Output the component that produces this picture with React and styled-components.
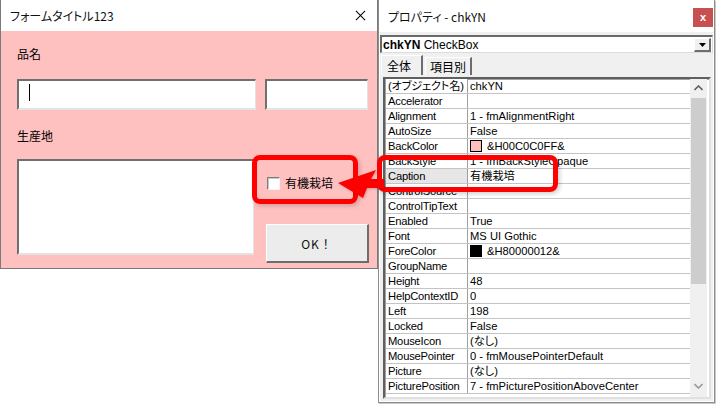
import React from "react";
import styled, { createGlobalStyle } from "styled-components";

const GlobalStyle = createGlobalStyle`
  html, body {
    margin: 0;
    padding: 0;
    background: #fff;
    overflow: hidden;
  }
  body {
    font-family: "Liberation Sans", "Noto Sans CJK JP", sans-serif;
    color: #000;
  }
  * { box-sizing: border-box; }
`;

const jp = `"Noto Sans CJK JP", "Liberation Sans", sans-serif`;

const properties = [
  { name: "(オブジェクト名)", value: "chkYN" },
  { name: "Accelerator", value: "" },
  { name: "Alignment", value: "1 - fmAlignmentRight" },
  { name: "AutoSize", value: "False" },
  { name: "BackColor", value: "&H00C0C0FF&", swatch: "#ffc0c0" },
  { name: "BackStyle", value: "1 - fmBackStyleOpaque" },
  { name: "Caption", value: "有機栽培", selected: true },
  { name: "ControlSource", value: "" },
  { name: "ControlTipText", value: "" },
  { name: "Enabled", value: "True" },
  { name: "Font", value: "MS UI Gothic" },
  { name: "ForeColor", value: "&H80000012&", swatch: "#000" },
  { name: "GroupName", value: "" },
  { name: "Height", value: "48" },
  { name: "HelpContextID", value: "0" },
  { name: "Left", value: "198" },
  { name: "Locked", value: "False" },
  { name: "MouseIcon", value: "(なし)" },
  { name: "MousePointer", value: "0 - fmMousePointerDefault" },
  { name: "Picture", value: "(なし)" },
  { name: "PicturePosition", value: "7 - fmPicturePositionAboveCenter" },
];

const App = () => {
  return (
    <>
      <GlobalStyle />
      <Stage>
        <FormWindow>
          <TitleBar>
            <TitleText>フォームタイトル123</TitleText>
            <CloseCross viewBox="0 0 12 12">
              <path d="M1 1 L11 11 M11 1 L1 11" stroke="#000" strokeWidth="1.1" />
            </CloseCross>
          </TitleBar>
          <FormBody>
            <FieldLabel>品名</FieldLabel>
            <InputRow>
              <TextBox $width={239}>
                <Caret />
              </TextBox>
              <TextBox $width={103} />
            </InputRow>
            <FieldLabel $gap={18}>生産地</FieldLabel>
            <LowerRow>
              <ListBox />
              <SideColumn>
                <CheckRow>
                  <CheckBox />
                  <span>有機栽培</span>
                </CheckRow>
                <OkButton>OK！</OkButton>
              </SideColumn>
            </LowerRow>
          </FormBody>
        </FormWindow>

        <PropWindow>
          <PropTitle>
            <span>プロパティ - chkYN</span>
            <CloseButton>x</CloseButton>
          </PropTitle>
          <Combo>
            <b>chkYN</b>&nbsp;CheckBox
            <ComboArrow>
              <svg width="7" height="4" viewBox="0 0 7 4">
                <path d="M0 0 H7 L3.5 4 Z" fill="#000" />
              </svg>
            </ComboArrow>
          </Combo>
          <TabStrip>
            <Tab $active>全体</Tab>
            <Tab>項目別</Tab>
          </TabStrip>
          <GridBox>
            <Rows>
              {properties.map((p) => (
                <PropRow key={p.name}>
                  <NameCell $selected={p.selected}>{p.name}</NameCell>
                  <ValueCell>
                    {p.swatch && <Swatch $color={p.swatch} />}
                    {p.value}
                  </ValueCell>
                </PropRow>
              ))}
            </Rows>
            <ScrollBar>
              <ScrollArrow viewBox="0 0 9 6">
                <path d="M0.5 5 L4.5 1 L8.5 5" stroke="#606060" strokeWidth="1.6" fill="none" />
              </ScrollArrow>
              <Thumb />
              <ScrollArrow viewBox="0 0 9 6" $down>
                <path d="M0.5 1 L4.5 5 L8.5 1" stroke="#9a9a9a" strokeWidth="1.6" fill="none" />
              </ScrollArrow>
            </ScrollBar>
          </GridBox>
        </PropWindow>

        <Highlight $left={252} $top={155} $w={106} $h={49} />
        <Highlight $left={377} $top={155} $w={181} $h={37} />
        <Arrow width="60" height="45" viewBox="0 0 60 45">
          <polygon points="8,23 46,10 41,19 54,19 54,28 37,28 33,38" fill="#ff0000" />
        </Arrow>
      </Stage>
    </>
  );
};

const Stage = styled.div`
  position: relative;
  width: 719px;
  height: 408px;
  display: flex;
  align-items: flex-start;
`;

/* ---------- user form ---------- */

const FormWindow = styled.section`
  width: 378px;
  height: 269px;
  border: 1px solid #7a7a7a;
  border-top: none;
  display: flex;
  flex-direction: column;
`;

const TitleBar = styled.header`
  height: 31px;
  background: #fff;
  display: flex;
  align-items: center;
  padding: 0 11px 0 9px;
`;

const TitleText = styled.span`
  font-family: ${jp};
  font-size: 12px;
  font-feature-settings: "palt";
  color: #111;
`;

const CloseCross = styled.svg`
  width: 11px;
  height: 11px;
  margin-left: auto;
`;

const FormBody = styled.div`
  flex: 1;
  background: #ffc0c0;
  padding: 14px 8px 0 16px;
  display: flex;
  flex-direction: column;
`;

const FieldLabel = styled.div`
  font-family: ${jp};
  font-size: 12px;
  line-height: 16px;
  height: 16px;
  margin-top: ${(p) => p.$gap || 1}px;
`;

const sunken = `
  background: #fff;
  border-style: solid;
  border-width: 2px 1px 2px 2px;
  border-color: #6f6f6f #e3e3e3 #e3e3e3 #6f6f6f;
`;

const InputRow = styled.div`
  display: flex;
  gap: 9px;
  margin-top: 17px;
`;

const TextBox = styled.div`
  ${sunken}
  position: relative;
  width: ${(p) => p.$width}px;
  height: 31px;
`;

const Caret = styled.span`
  position: absolute;
  left: 10px;
  top: 3px;
  width: 1px;
  height: 17px;
  background: #000;
`;

const LowerRow = styled.div`
  display: flex;
  gap: 12px;
  margin-top: 15px;
`;

const ListBox = styled.div`
  ${sunken}
  width: 237px;
  height: 96px;
`;

const SideColumn = styled.div`
  width: 103px;
  height: 104px;
  display: flex;
  flex-direction: column;
`;

const CheckRow = styled.label`
  display: flex;
  align-items: center;
  gap: 5px;
  margin-top: 16px;
  padding-left: 1px;
  font-family: ${jp};
  font-size: 12px;
  line-height: 16px;
`;

const CheckBox = styled.span`
  width: 13px;
  height: 13px;
  background: #fff;
  border-style: solid;
  border-width: 1px;
  border-color: #7c7c7c #f4f4f4 #f4f4f4 #7c7c7c;
  box-shadow: inset 1px 1px 0 #c8c8c8;
`;

const OkButton = styled.button`
  margin-top: auto;
  height: 39px;
  width: 103px;
  background: #ececec;
  border-style: solid;
  border-width: 1px 2px 2px 1px;
  border-color: #fff #6d6d6d #6d6d6d #fff;
  font-family: ${jp};
  font-size: 12px;
  color: #111;
  letter-spacing: 1px;
  padding: 0;
`;

/* ---------- property window ---------- */

const PropWindow = styled.section`
  width: 337px;
  height: 403px;
  background: #f0f0f0;
  border: 1px solid #8c8c8c;
  border-top: none;
  box-shadow: 1px 1px 0 #c9c9c9, 0 0 0 1px #fff inset;
  display: flex;
  flex-direction: column;
`;

const PropTitle = styled.header`
  height: 33px;
  background: #fff;
  display: flex;
  align-items: center;
  padding: 0 1px 0 9px;
  font-family: ${jp};
  font-size: 12px;
  font-feature-settings: "palt";
  color: #111;
  border-bottom: 1px solid #f0f0f0;
`;

const CloseButton = styled.span`
  margin-left: auto;
  width: 20px;
  height: 19px;
  margin-top: 3px;
  background: #c75050;
  color: #fff;
  font-family: "Liberation Sans", sans-serif;
  font-weight: bold;
  font-size: 11px;
  display: flex;
  align-items: center;
  justify-content: center;
  padding-bottom: 2px;
`;

const Combo = styled.div`
  margin: 2px 1px 0 1px;
  height: 18px;
  background: #fff;
  border-style: solid;
  border-width: 2px 1px 1px 2px;
  border-color: #6a6a6a #dcdcdc #dcdcdc #6a6a6a;
  display: flex;
  align-items: center;
  padding-left: 1px;
  font-size: 12px;
  b { font-weight: bold; }
`;

const ComboArrow = styled.span`
  margin-left: auto;
  width: 17px;
  height: 14px;
  margin-right: 1px;
  background: #f0f0f0;
  border-style: solid;
  border-width: 1px 2px 2px 1px;
  border-color: #fff #6d6d6d #6d6d6d #fff;
  display: flex;
  align-items: center;
  justify-content: center;
  padding-top: 1px;
`;

const TabStrip = styled.div`
  display: flex;
  align-items: flex-end;
  height: 22px;
  padding-left: 2px;
  gap: 2px;
`;

const Tab = styled.div`
  font-family: ${jp};
  font-size: 12px;
  line-height: 16px;
  height: ${(p) => (p.$active ? 20 : 18)}px;
  padding: ${(p) => (p.$active ? "2px 10px 0 5px" : "1px 4px 0 4px")};
  background: #f0f0f0;
  border-style: solid;
  border-width: 1px 2px 0 1px;
  border-color: #fff #6d6d6d #fff #fff;
`;

const GridBox = styled.div`
  margin: 2px 3px 0 4px;
  height: 322px;
  background: #fff;
  border-style: solid;
  border-width: 2px;
  border-color: #5f5f5f #e0e0e0 #e0e0e0 #5f5f5f;
  box-shadow: inset 1px 1px 0 #a0a0a0;
  display: flex;
  padding: 0 2px 0 1px;
  overflow: hidden;
`;

const Rows = styled.div`
  flex: 1;
  display: flex;
  flex-direction: column;
`;

const PropRow = styled.div`
  display: flex;
  height: 15px;
  flex-shrink: 0;
  border-bottom: 1px solid #c4c4c4;
  font-size: 11.2px;
  line-height: 14px;
  white-space: nowrap;
  font-feature-settings: "palt";
`;

const NameCell = styled.div`
  width: 82px;
  padding-left: 2px;
  border-right: 1px solid #a0a0a0;
  background: ${(p) => (p.$selected ? "#e6e6e6" : "#fff")};
  overflow: hidden;
  letter-spacing: -0.2px;
`;

const ValueCell = styled.div`
  flex: 1;
  display: flex;
  align-items: center;
  padding-left: 2px;
  gap: 5px;
`;

const Swatch = styled.span`
  width: 12px;
  height: 12px;
  background: ${(p) => p.$color};
  border: 1px solid #000;
`;

const ScrollBar = styled.div`
  width: 17px;
  background: #f0f0f0;
  display: flex;
  flex-direction: column;
  align-items: center;
  padding-top: 6px;
`;

const ScrollArrow = styled.svg`
  width: 9px;
  height: 6px;
  flex-shrink: 0;
  margin-top: ${(p) => (p.$down ? "auto" : "0")};
  margin-bottom: ${(p) => (p.$down ? "8px" : "0")};
`;

const Thumb = styled.div`
  margin-top: 7px;
  width: 15px;
  height: 186px;
  background: #cdcdcd;
`;

/* ---------- callouts ---------- */

const Highlight = styled.div`
  position: absolute;
  left: ${(p) => p.$left}px;
  top: ${(p) => p.$top}px;
  width: ${(p) => p.$w}px;
  height: ${(p) => p.$h}px;
  border: 5px solid #ff0000;
  border-radius: 8px;
  box-shadow: 2px 2px 4px rgba(0, 0, 0, 0.18);
  pointer-events: none;
`;

const Arrow = styled.svg`
  position: absolute;
  left: 330px;
  top: 160px;
  filter: drop-shadow(1px 1px 1px rgba(0, 0, 0, 0.2));
`;

export default App;
